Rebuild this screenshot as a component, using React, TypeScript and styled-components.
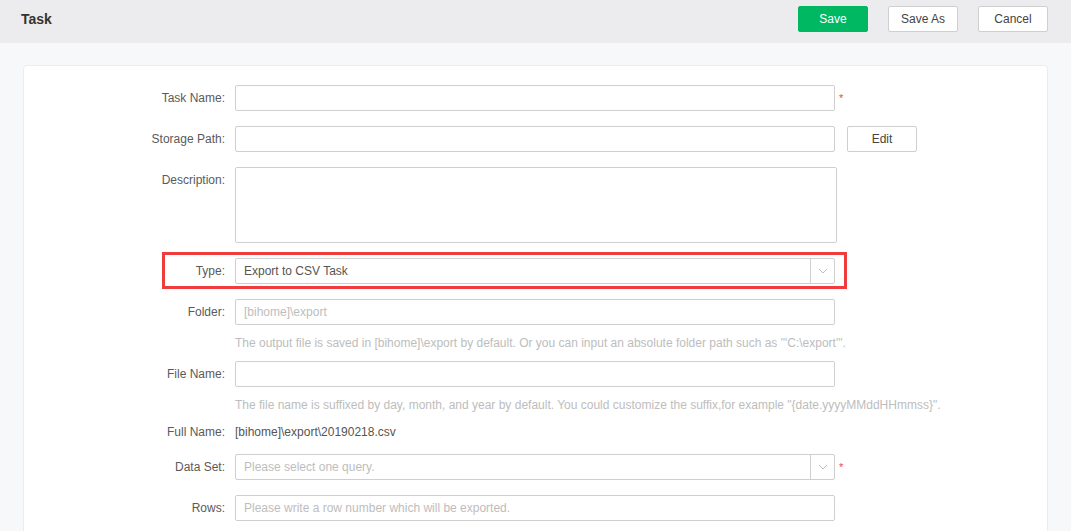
import React from "react";
import styled, { createGlobalStyle } from "styled-components";

const GlobalStyle = createGlobalStyle`
  html, body {
    margin: 0;
    padding: 0;
    background: #f7f8fa;
    font-family: "Liberation Sans", Arial, sans-serif;
    font-size: 12px;
    color: #555;
  }
`;

const Page = styled.div`
  width: 1071px;
  height: 531px;
  overflow: hidden;
  background: #f7f8fa;
`;

const Header = styled.div`
  height: 43px;
  background: #ececee;
  display: flex;
  align-items: center;
  justify-content: space-between;
  padding: 0 23px 0 21px;
  box-sizing: border-box;
`;

const Title = styled.div`
  font-size: 14px;
  font-weight: bold;
  color: #333;
  margin-top: -5px;
`;

const Actions = styled.div`
  display: flex;
  gap: 20px;
  margin-top: -6px;
`;

const Button = styled.button<{ primary?: boolean }>`
  width: 70px;
  height: 26px;
  border-radius: 2px;
  font-family: "Liberation Sans", Arial, sans-serif;
  font-size: 12px;
  cursor: pointer;
  padding: 0;
  border: 1px solid ${(p) => (p.primary ? "#00b862" : "#cfcfcf")};
  background: ${(p) => (p.primary ? "#00b862" : "#fff")};
  color: ${(p) => (p.primary ? "#fff" : "#444")};
`;

const Card = styled.div`
  margin: 22px 23px 0 23px;
  background: #fff;
  border: 1px solid #ececec;
  border-radius: 4px;
  padding: 19px 0 40px 0;
`;

const Row = styled.div<{ gap?: number; top?: boolean }>`
  position: relative;
  display: grid;
  grid-template-columns: 201px auto;
  column-gap: 10px;
  align-items: ${(p) => (p.top ? "start" : "center")};
  margin-bottom: ${(p) => (p.gap ?? 15)}px;
`;

const Label = styled.label<{ top?: boolean }>`
  text-align: right;
  color: #5a5a5a;
  font-size: 12px;
  padding-top: ${(p) => (p.top ? "6px" : "0")};
`;

const Field = styled.div`
  display: flex;
  align-items: center;
`;

const Input = styled.input`
  width: 600px;
  height: 26px;
  box-sizing: border-box;
  border: 1px solid #cfcfcf;
  border-radius: 2px;
  padding: 0 8px;
  font-family: "Liberation Sans", Arial, sans-serif;
  font-size: 12px;
  color: #555;
  outline: none;
  &::placeholder {
    color: #bdbdbd;
  }
`;

const TextArea = styled.textarea`
  width: 602px;
  height: 76px;
  box-sizing: border-box;
  border: 1px solid #cfcfcf;
  border-radius: 2px;
  resize: none;
  outline: none;
  margin: 0;
  display: block;
`;

const Required = styled.span`
  color: #f04848;
  font-size: 11px;
  margin-left: 4px;
  margin-top: -1px;
`;

const SideButton = styled(Button)`
  margin-left: 12px;
`;

const Select = styled.div`
  width: 600px;
  height: 26px;
  box-sizing: border-box;
  border: 1px solid #cfcfcf;
  border-radius: 2px;
  display: flex;
  align-items: stretch;
`;

const SelectValue = styled.div<{ placeholder?: boolean }>`
  flex: 1;
  display: flex;
  align-items: center;
  padding: 0 8px;
  color: ${(p) => (p.placeholder ? "#bdbdbd" : "#555")};
`;

const SelectArrow = styled.div`
  width: 23px;
  border-left: 1px solid #cfcfcf;
  display: flex;
  align-items: center;
  justify-content: center;
`;

const Hint = styled.div`
  grid-column: 2;
  color: #bdbdbd;
  line-height: 20px;
  white-space: nowrap;
`;

const Value = styled.div`
  height: 26px;
  line-height: 26px;
  color: #555;
`;

const Highlight = styled.div`
  position: absolute;
  left: 138px;
  top: -6px;
  width: 685px;
  height: 37px;
  box-sizing: border-box;
  border: 3px solid #f03c3c;
  pointer-events: none;
`;

const Chevron = () => (
  <svg width="10" height="6" viewBox="0 0 10 6">
    <path d="M1 1l4 4 4-4" fill="none" stroke="#bdbdbd" strokeWidth="1" />
  </svg>
);

export default function App() {
  return (
    <Page>
      <GlobalStyle />
      <Header>
        <Title>Task</Title>
        <Actions>
          <Button primary>Save</Button>
          <Button>Save As</Button>
          <Button>Cancel</Button>
        </Actions>
      </Header>
      <Card>
        <Row>
          <Label>Task Name:</Label>
          <Field>
            <Input />
            <Required>*</Required>
          </Field>
        </Row>
        <Row>
          <Label>Storage Path:</Label>
          <Field>
            <Input />
            <SideButton>Edit</SideButton>
          </Field>
        </Row>
        <Row top>
          <Label top>Description:</Label>
          <Field>
            <TextArea />
          </Field>
        </Row>
        <Row>
          <Highlight />
          <Label>Type:</Label>
          <Select>
            <SelectValue>Export to CSV Task</SelectValue>
            <SelectArrow>
              <Chevron />
            </SelectArrow>
          </Select>
        </Row>
        <Row gap={0}>
          <Label>Folder:</Label>
          <Input placeholder="[bihome]\export" />
        </Row>
        <Row gap={8} style={{ paddingTop: 8 }}>
          <Hint>
            The output file is saved in [bihome]\export by default. Or you can input an absolute folder path such as "'C:\export'".
          </Hint>
        </Row>
        <Row gap={0}>
          <Label>File Name:</Label>
          <Input />
        </Row>
        <Row gap={4} style={{ paddingTop: 8 }}>
          <Hint>
            The file name is suffixed by day, month, and year by default. You could customize the suffix,for example "{"{"}date.yyyyMMddHHmmss{"}"}".
          </Hint>
        </Row>
        <Row gap={9}>
          <Label>Full Name:</Label>
          <Value>[bihome]\export\20190218.csv</Value>
        </Row>
        <Row>
          <Label>Data Set:</Label>
          <Field>
            <Select>
              <SelectValue placeholder>Please select one query.</SelectValue>
              <SelectArrow>
                <Chevron />
              </SelectArrow>
            </Select>
            <Required>*</Required>
          </Field>
        </Row>
        <Row>
          <Label>Rows:</Label>
          <Input placeholder="Please write a row number which will be exported." />
        </Row>
      </Card>
    </Page>
  );
}
